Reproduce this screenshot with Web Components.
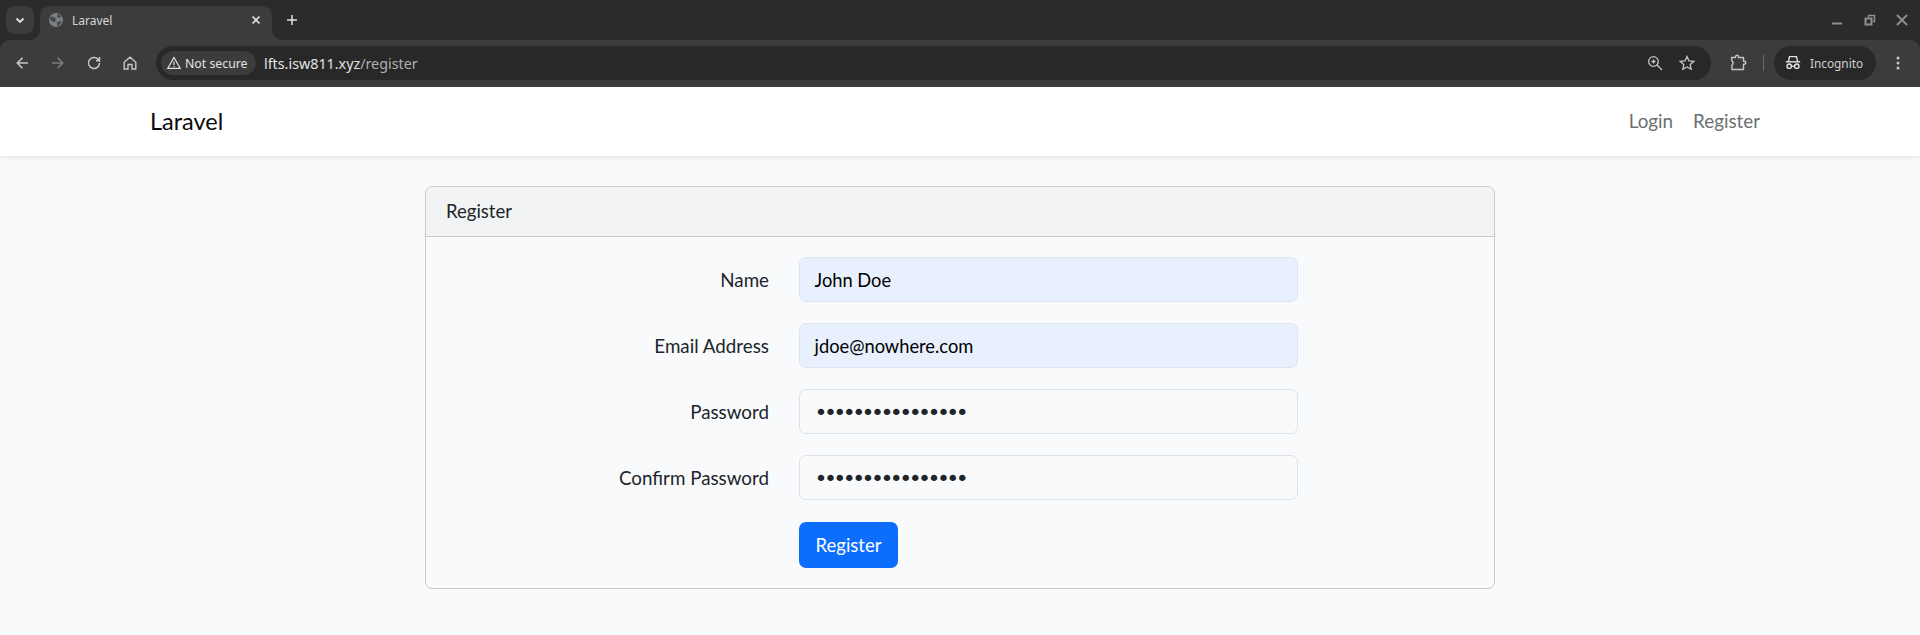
<!DOCTYPE html>
<html><head><meta charset="utf-8"><title>Laravel</title>
<style>
html,body{margin:0;padding:0;height:635px;overflow:hidden;background:#f8fafc}
body{font-family:"Lato","Noto Sans",sans-serif}
</style></head><body>
<browser-chrome></browser-chrome>
<app-navbar></app-navbar>
<main-page>
  <form-card title="Register">
    <form-row label="Name" value="John Doe" fill></form-row>
    <form-row label="Email Address" value="jdoe@nowhere.com" fill></form-row>
    <form-row label="Password" value="••••••••••••••••" pw></form-row>
    <form-row label="Confirm Password" value="••••••••••••••••" pw></form-row>
    <form-submit>Register</form-submit>
  </form-card>
</main-page>
<script>
const def=(n,html)=>customElements.define(n,class extends HTMLElement{connectedCallback(){if(this.shadowRoot)return;const s=this.attachShadow({mode:'open'});s.innerHTML=typeof html==='function'?html(this):html;}});
const I=(d,sw=1.5)=>`<svg viewBox="0 0 16 16" width="16" height="16" fill="none" stroke="currentColor" stroke-width="${sw}">${d}</svg>`;
def('browser-chrome',`<style>
:host{display:block;font-family:"Noto Sans","Open Sans",sans-serif;color:#e3e3e3;background:#2b2b2b}
.top{height:40px;display:flex;align-items:flex-end;box-sizing:border-box;padding-left:6px}
.dd{width:28px;height:28px;border-radius:9px;background:#3c3c3c;display:flex;align-items:center;justify-content:center;margin:0 6px 6px 0}
.tab{width:232px;height:34px;background:#3c3c3c;border-radius:10px 10px 0 0;display:flex;align-items:center;box-sizing:border-box;padding:0 9px 6px 8px;font-size:12px;color:#d6d6d6;position:relative}
.tab::before,.tab::after{content:"";position:absolute;bottom:0;width:10px;height:10px}
.tab::before{left:-10px;background:radial-gradient(circle at 0 0,transparent 9.500px,#3c3c3c 10px)}
.tab::after{right:-10px;background:radial-gradient(circle at 100% 0,transparent 9.500px,#3c3c3c 10px)}
.tab span{flex:1;margin-left:8px}
.plus{margin:0 0 6px 13px;height:28px;display:flex;align-items:center}
.win{margin-left:auto;display:flex;align-items:center;gap:16.500px;height:40px;padding-right:10px;color:#8f8f8f;align-self:flex-start}
.bar{height:47px;background:#3c3c3c;border-radius:10px 10px 0 0;display:flex;align-items:center;box-sizing:border-box;padding:0 0 1px 14px}
.nav{display:flex;align-items:center;gap:20px;color:#c7c7c7;width:142px}
.omni{width:1555px;height:34px;border-radius:17px;background:#282828;display:flex;align-items:center;box-sizing:border-box;padding:0 16px 0 5px}
.sec{height:24px;border-radius:12px;background:#3c3c3c;display:flex;align-items:center;gap:3px;padding:0 0 0 5px;font-size:12.300px;color:#e3e3e3;width:95px;box-sizing:border-box}
.url{margin-left:8px;font-size:14.300px;color:#e3e3e3;flex:1}.url i{font-style:normal;color:#b0b0b0}
.ic{display:flex;gap:16px;align-items:center;color:#c7c7c7}
.ext{margin-left:18px;color:#c7c7c7;display:flex}
.sep{width:1px;height:16px;background:#6a6a6a;margin:0 10px 0 16px}
.inc{width:102px;height:34px;border-radius:17px;background:#282828;display:flex;align-items:center;gap:9px;box-sizing:border-box;padding-left:11px;font-size:11.800px;color:#d0d0d0}
.more{margin-left:14px;color:#c7c7c7;display:flex}
</style>
<div class="top">
 <div class="dd"><svg width="12" height="12" viewBox="0 0 12 12" fill="none" stroke="#e3e3e3" stroke-width="1.800"><path d="M2.500 4.500 6 8l3.500-3.500"/></svg></div>
 <div class="tab">
  <svg width="16" height="16" viewBox="0 0 16 16"><circle cx="8" cy="8" r="7" fill="#7b7e84"/><path d="M2.500 4.500l3 .5 2.500 2-.5 2.500-2 .5-3.500-2.500zM10 1.800l3 2.200-1 2-3-1zM9 10.500l3.500-1.500 1.200 1-3.700 4-1-1z" fill="#45474b"/></svg>
  <span>Laravel</span>
  <svg width="14" height="14" viewBox="0 0 14 14" fill="none" stroke="#e3e3e3" stroke-width="1.600"><path d="M3.500 3.500l7 7M10.500 3.500l-7 7"/></svg>
 </div>
 <div class="plus"><svg width="14" height="14" viewBox="0 0 14 14" fill="none" stroke="#e3e3e3" stroke-width="1.500"><path d="M7 2v10M2 7h10"/></svg></div>
 <div class="win">
  <svg width="16" height="16" viewBox="0 0 16 16" fill="none" stroke="currentColor" stroke-width="2"><path d="M3 11.500h10"/></svg>
  <svg width="16" height="16" viewBox="0 0 16 16" fill="none" stroke="currentColor" stroke-width="1.500"><path d="M6.500 5V3.500h6v6H11"/><rect x="3.500" y="6.500" width="6" height="6" stroke-width="2"/></svg>
  <svg width="16" height="16" viewBox="0 0 16 16" fill="none" stroke="currentColor" stroke-width="1.800"><path d="M3 3l10 10M13 3L3 13"/></svg>
 </div>
</div>
<div class="bar">
 <div class="nav">
  ${I('<path d="M14 8H3.500M8.500 2.800 3.300 8l5.200 5.200"/>',1.6)}
  <span style="color:#7d7d7d;display:flex">${I('<path d="M2 8h10.500M7.500 2.800 12.700 8l-5.200 5.200"/>',1.6)}</span>
  ${I('<path d="M13.500 8a5.500 5.500 0 1 1-1.600-3.900L13.500 5.700V2M13.500 5.700H10"/>',1.5)}
  ${I('<path d="M2.200 7.200 8 2.200l5.800 5V14H10V9.500H6V14H2.200z"/>',1.4)}
 </div>
 <div class="omni">
  <div class="sec"><svg width="16" height="16" viewBox="0 0 16 16" fill="none" stroke="#e3e3e3" stroke-width="1.200"><path d="M8 2.500 14.200 13.300H1.800z"/><path d="M8 6.500v3.500M8 11v1"/></svg><span>Not secure</span></div>
  <div class="url">lfts.isw811.xyz<i>/register</i></div>
  <div class="ic">
   <svg width="16" height="16" viewBox="0 0 16 16" fill="none" stroke="currentColor" stroke-width="1.300"><circle cx="6.500" cy="6.500" r="4.800"/><path d="M10 10l5 5M4.500 6.500h4M6.500 4.500v4"/></svg>
   <svg width="16" height="16" viewBox="0 0 16 16" fill="none" stroke="currentColor" stroke-width="1.300"><path d="M8 1.500l2 4.400 4.800.5-3.600 3.200 1 4.700L8 11.900l-4.200 2.400 1-4.700L1.200 6.400 6 5.900z"/></svg>
  </div>
 </div>
 <div class="ext"><svg width="18" height="18" viewBox="0 0 18 18" fill="none" stroke="currentColor" stroke-width="1.400" stroke-linejoin="round"><path d="M2.500 3.500H6.500V2.700a1.500 1.500 0 0 1 3 0V3.500H14.500V7.200h.8a1.500 1.500 0 0 1 0 3h-.8V15.500H3V11a2.200 2.200 0 0 0 0-3.800z"/></svg></div>
 <div class="sep"></div>
 <div class="inc"><svg width="16" height="16" viewBox="0 0 16 16" fill="none" stroke="#e3e3e3" stroke-width="1.400"><path d="M.8 6.800h14.400"/><path d="M3.300 6.800l1.200-5.200h7l1.200 5.200" stroke-linejoin="round"/><circle cx="4.200" cy="11.200" r="2.200"/><circle cx="11.800" cy="11.200" r="2.200"/><path d="M6.400 11.200h3.200"/></svg><span>Incognito</span></div>
 <div class="more"><svg width="16" height="16" viewBox="0 0 16 16" fill="#c7c7c7"><circle cx="8" cy="3" r="1.500"/><circle cx="8" cy="8" r="1.500"/><circle cx="8" cy="13" r="1.500"/></svg></div>
</div>`);
def('app-navbar',`<style>
:host{display:flex;height:69px;background:#fff;box-shadow:0 2px 5px rgba(0,0,0,.075);align-items:center;justify-content:space-between;padding:0 160px 2px 150px;position:relative;box-sizing:border-box;font-size:18.800px;color:#6c6e70}
.b{font-size:23.500px;color:#0a0a0a}
.l{display:flex;gap:20px}
</style><div class="b">Laravel</div><div class="l"><span>Login</span><span>Register</span></div>`);
def('main-page',`<style>:host{display:block;padding-top:30px}</style><slot></slot>`);
def('form-card',e=>`<style>
:host{display:block;width:1070px;margin:0 0 0 425px;box-sizing:border-box;border:1px solid #c9cacc;border-radius:7px;font-size:18.500px;color:#212529}
.h{height:50px;background:#f2f3f4;border-bottom:1px solid #c9cacc;display:flex;align-items:center;padding:0 20px 2px;border-radius:6px 6px 0 0;box-sizing:border-box}
.b{padding:20px 0 20px;display:flex;flex-direction:column;gap:21px}
</style><div class="h">${e.getAttribute('title')}</div><div class="b"><slot></slot></div>`);
def('form-row',e=>`<style>
:host{display:grid;grid-template-columns:343px 499px;column-gap:30px;align-items:center;color:#212529;font-size:18.800px}
.l{text-align:right}
.i{height:45px;box-sizing:border-box;border:1px solid ${e.hasAttribute('fill')?'#dee5f2':'#dee2e6'};border-radius:7px;background:${e.hasAttribute('fill')?'#e8f0fe':'#f8fafc'};padding:0 14.500px;display:flex;align-items:center;font-size:18.300px;color:${e.hasAttribute('pw')?'#212529':'#000'};${e.hasAttribute('pw')?'font-family:"DejaVu Sans",sans-serif;font-size:22px;letter-spacing:-3.560px;padding-top:2px;':''}}
</style><div class="l">${e.getAttribute('label')}</div><div class="i">${e.getAttribute('value')}</div>`);
def('form-submit',`<style>
:host{display:block;padding-left:373px;margin-top:1px;font-size:18.500px}
.btn{display:inline-flex;align-items:center;justify-content:center;width:99px;height:46px;background:#0d6efd;color:#fff;border-radius:7px;box-sizing:border-box}
</style><div class="btn"><slot></slot></div>`);
</script></body></html>
